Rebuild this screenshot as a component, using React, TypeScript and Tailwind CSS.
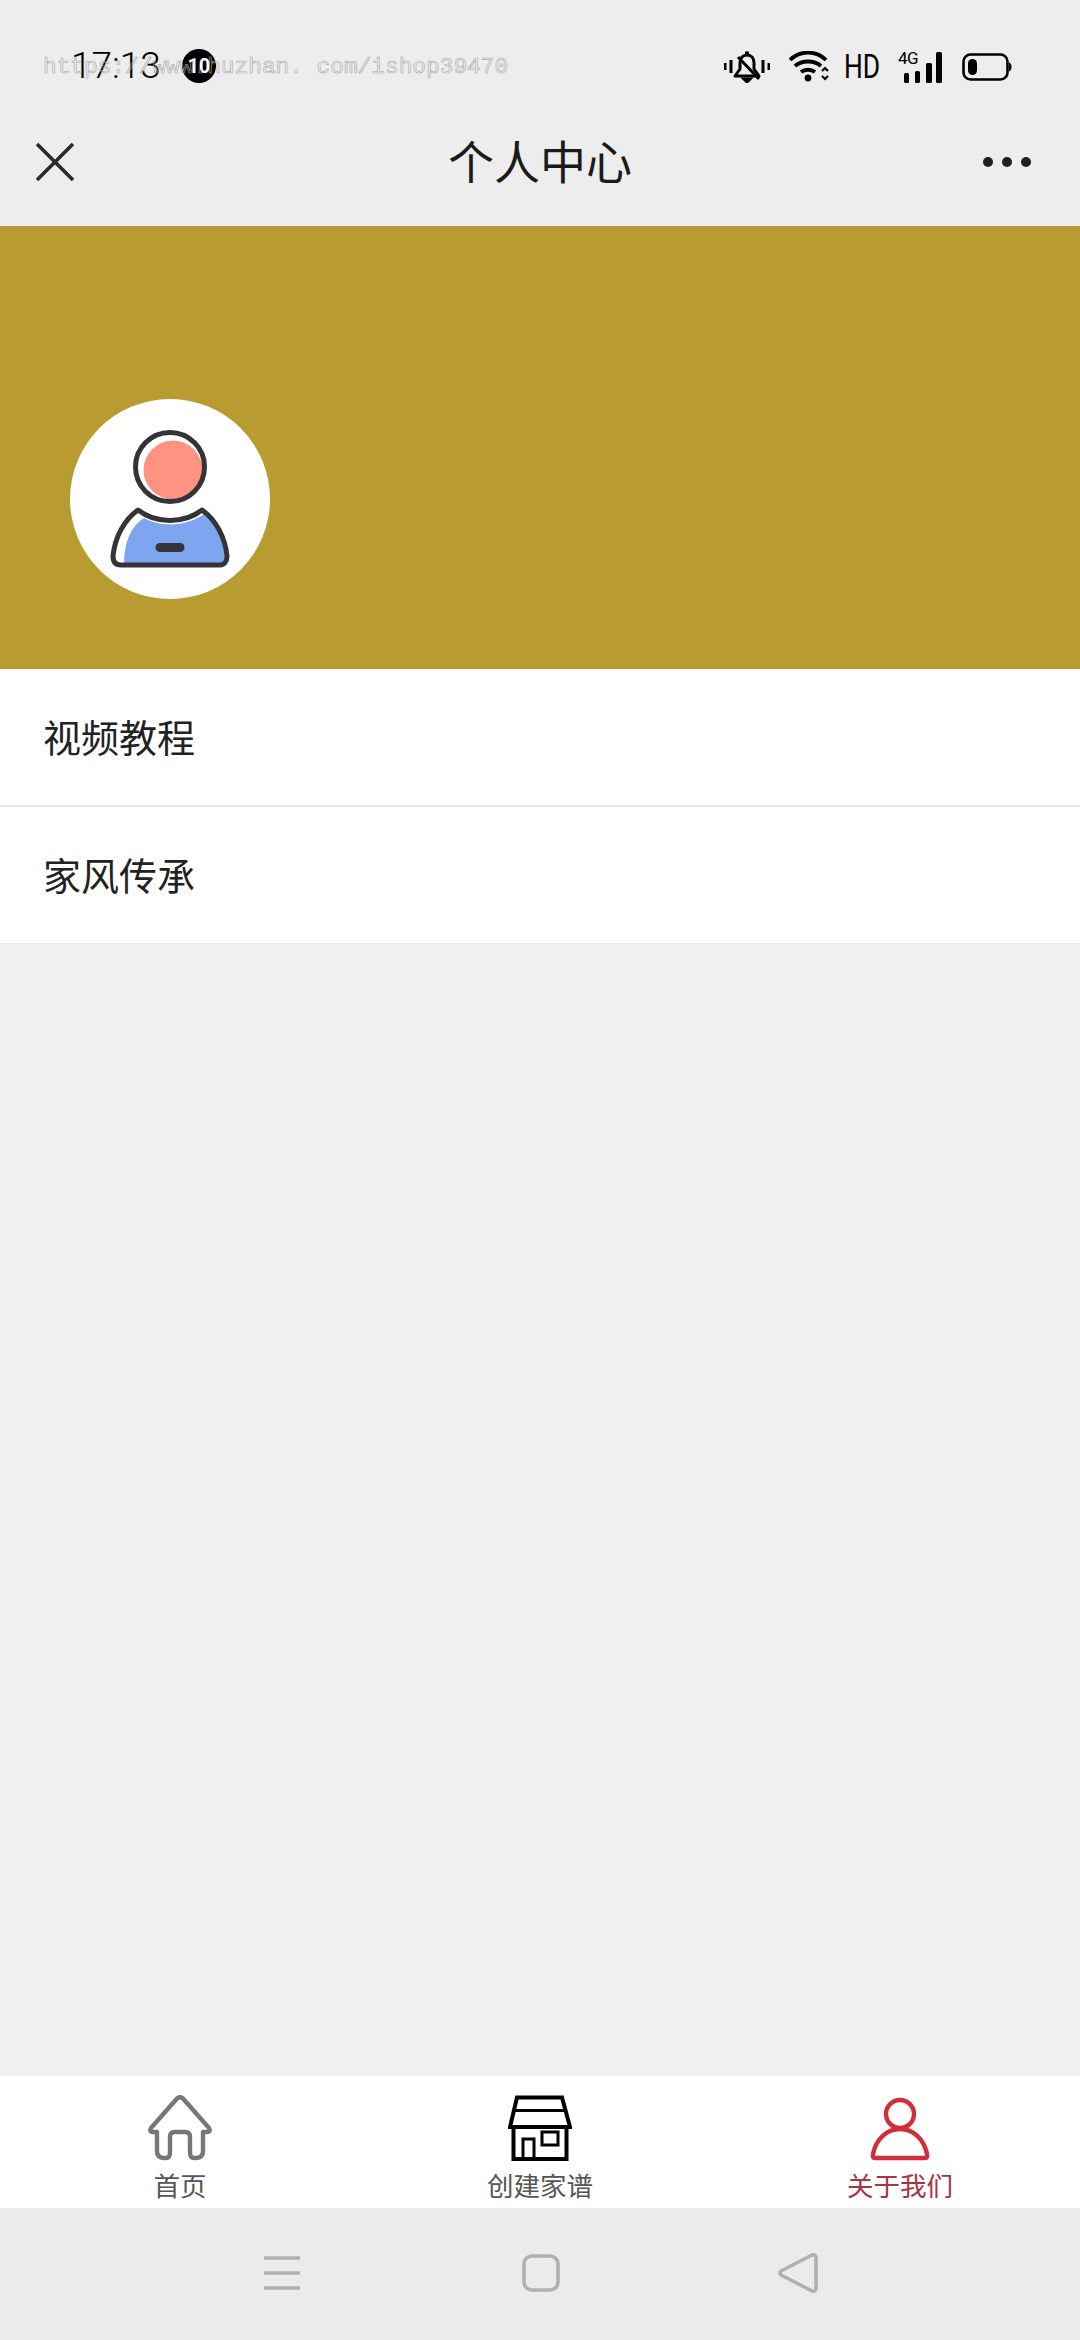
const cjk = "font-['Noto_Sans_CJK_SC','Noto_Sans',sans-serif]";

function Bell() {
  return (
    <svg width="46" height="32" viewBox="0 0 46 32" fill="none" stroke="#000" strokeWidth="3">
      <path d="M1 12v7M7 9v13M39 9v13M45 12v7" />
      <path d="M11 25h24l-5-7v-6c0-5-3-8-7-8s-7 3-7 8v6z" strokeLinejoin="round" />
      <path d="M21 2h4M20 28h6l-3 3z" />
      <path d="M14 6l21 22" />
    </svg>
  );
}

function Wifi() {
  return (
    <svg width="41" height="32" viewBox="0 0 41 32" fill="none" stroke="#000" strokeWidth="3.8">
      <path d="M1 9c10-10 26-10 36 0" />
      <path d="M6 15c7-6 19-6 26 0" />
      <path d="M12 21c4-3 10-3 14 0" />
      <circle cx="19" cy="27" r="3.4" fill="#000" stroke="none" />
      <path d="M33 20l3-3 3 3M33 25l3 3 3-3" strokeWidth="2.2" />
    </svg>
  );
}

function Signal() {
  return (
    <div className="relative h-[32px] w-[44px]">
      <span className="absolute left-0 top-[-3px] font-['Roboto',sans-serif] text-[17px] font-normal leading-[20px] tracking-[-0.5px] text-black">4G</span>
      <svg width="44" height="32" viewBox="0 0 44 32" fill="#000" className="absolute left-0 top-0">
        <rect x="6" y="22" width="5" height="10" rx="1.5" />
        <rect x="17" y="20" width="5" height="12" rx="1.5" />
        <rect x="28" y="12" width="6" height="20" rx="1.5" />
        <rect x="38" y="1" width="6" height="31" rx="1.5" />
      </svg>
    </div>
  );
}

function Battery() {
  return (
    <svg width="50" height="28" viewBox="0 0 50 28" fill="none">
      <rect x="1.5" y="1.5" width="44" height="25" rx="7" stroke="#000" strokeWidth="2.6" />
      <rect x="6" y="6" width="9" height="16" rx="4.5" fill="#000" />
      <path d="M47.5 10c2 1 2 7 0 8z" fill="#000" stroke="#000" strokeWidth="1" />
    </svg>
  );
}

function Avatar() {
  return (
    <div className="h-[200px] w-[200px] overflow-hidden rounded-full bg-white">
      <svg width="200" height="200" viewBox="20 18 200 200" fill="none">
        <circle cx="123" cy="89" r="29.5" fill="#ff9382" />
        <circle cx="120" cy="86" r="34.5" stroke="#333338" strokeWidth="5" />
        <path d="M94 137c16 9 42 9 60-4 12 10 20 24 21 48l-4 3H74c0-22 6-38 20-47z" fill="#7ea6f0" />
        <path d="M88 129c18 14 46 14 64 0 14 10 23 27 25 46 0 6-3 9-7 9H71c-5 0-8-3-8-9 2-19 11-36 25-46z" stroke="#333338" strokeWidth="5" strokeLinejoin="round" />
        <rect x="105.500" y="162" width="29" height="9" rx="4.500" fill="#333338" />
      </svg>
    </div>
  );
}

function HomeIcon() {
  return (
    <svg width="64" height="66" viewBox="0 0 64 66" fill="none" stroke="#777" strokeWidth="4.4" strokeLinejoin="round">
      <path d="M29 3.500Q32 1 35 3.500L61 33Q63 37 59 37H55V56Q55 63 48 63H46Q42 63 42 57V42Q42 37 37 37H27Q22 37 22 42V57Q22 63 18 63H16Q9 63 9 56V37H5Q1 37 3 33Z" />
    </svg>
  );
}

function StoreIcon() {
  return (
    <svg width="64" height="66" viewBox="0 0 64 66" fill="none" stroke="#000">
      <path d="M9 2.500H54L62 32H2Z" strokeWidth="4" />
      <path d="M6 15.500H58" strokeWidth="3" />
      <path d="M5.500 31V64H58.500V31" strokeWidth="4" />
      <path d="M15 64V44H26V64" strokeWidth="3" />
      <rect x="34" y="37" width="16" height="13" strokeWidth="3" />
    </svg>
  );
}

function PersonIcon() {
  return (
    <svg width="64" height="66" viewBox="-3 -4 64 66" fill="none" stroke="#cf2f38" strokeWidth="4.4" strokeLinejoin="round">
      <circle cx="29" cy="15" r="14" />
      <path d="M4 59H54Q57 59 56 55C53 40 42 30 29 30C16 30 5 40 2 55Q1 59 4 59Z" />
    </svg>
  );
}

function MenuRow({ label, border }: { label: string; border: string }) {
  return (
    <div className={`flex h-[138px] items-center bg-white pb-[2px] pl-[43px] text-[38px] leading-none text-[#222] ${border}`}>
      {label}
    </div>
  );
}

function Tab({ icon, label, color }: { icon: React.ReactNode; label: string; color: string }) {
  return (
    <div className="flex flex-1 flex-col items-center pt-[19px]">
      {icon}
      <div className={`mt-[9px] text-[26.5px] leading-[30px] ${color}`}>{label}</div>
    </div>
  );
}

export default function App() {
  return (
    <div className={`relative flex h-[2340px] w-[1080px] flex-col overflow-hidden bg-[#f0f0f0] ${cjk}`}>
      <header className="bg-[#ededed]">
        <div className="flex h-[115px] items-start justify-between pl-[71px] pr-[68px] pt-[48px]">
          <div className="flex items-center">
            <span className="font-['Roboto',sans-serif] text-[37px] font-light leading-[36px] text-black">17:13</span>
            <span className="ml-[21px] flex h-[34px] w-[34px] items-center justify-center rounded-full bg-black font-['Roboto',sans-serif] text-[20px] font-bold leading-none text-white">10</span>
          </div>
          <div className="flex items-center pt-[3px]">
            <Bell />
            <div className="ml-[19px]"><Wifi /></div>
            <span className="ml-[14px] w-[36px] origin-left scale-x-[0.8] font-['Roboto',sans-serif] text-[33px] font-normal leading-[32px] text-black">HD</span>
            <div className="ml-[18px]"><Signal /></div>
            <div className="ml-[20px]"><Battery /></div>
          </div>
        </div>
        <div className="relative flex h-[111px] items-center justify-between pb-[18px] pl-[36px] pr-[49px]">
          <svg width="38" height="38" viewBox="0 0 38 38" stroke="#2a2a2a" strokeWidth="3.600">
            <path d="M1 1L37 37M37 1L1 37" />
          </svg>
          <div className="absolute inset-x-0 top-0 pt-[19px] text-center text-[46px] leading-[50px] text-[#1a1a1a]">个人中心</div>
          <div className="flex gap-[9px]">
            <span className="h-[10px] w-[10px] rounded-full bg-[#1f1f1f]" />
            <span className="h-[10px] w-[10px] rounded-full bg-[#1f1f1f]" />
            <span className="h-[10px] w-[10px] rounded-full bg-[#1f1f1f]" />
          </div>
        </div>
      </header>

      <section className="flex h-[443px] items-end bg-[#b89b31] pb-[70px] pl-[70px]">
        <Avatar />
      </section>

      <MenuRow label="视频教程" border="border-b-2 border-[#e8e8e8]" />
      <MenuRow label="家风传承" border="border-b-2 border-[#ebebeb]" />

      <div className="flex-1" />

      <nav className="flex h-[132px] bg-white">
        <Tab icon={<HomeIcon />} label="首页" color="text-[#555]" />
        <Tab icon={<StoreIcon />} label="创建家谱" color="text-[#555]" />
        <Tab icon={<PersonIcon />} label="关于我们" color="text-[#a93440]" />
      </nav>

      <footer className="flex h-[132px] items-center justify-center bg-[#ebebeb] pb-[2px]">
        <svg width="38" height="36" viewBox="0 0 38 36" stroke="#b0b0b0" strokeWidth="3.600">
          <path d="M1 3H37M1 18H37M1 33H37" />
        </svg>
        <svg className="ml-[221px]" width="38" height="38" viewBox="0 0 38 38" fill="none" stroke="#b0b0b0" strokeWidth="3.600">
          <rect x="2" y="2" width="34" height="34" rx="8" />
        </svg>
        <svg className="ml-[218px]" width="40" height="42" viewBox="0 0 40 42" fill="none" stroke="#b0b0b0" strokeWidth="3.600" strokeLinejoin="round">
          <path d="M34 3L3 19Q1 21 3 23L34 39Q38 40 38 36V6Q38 2 34 3Z" />
        </svg>
      </footer>

      <div className="pointer-events-none absolute left-[43px] top-[51px] whitespace-pre font-['Liberation_Mono',monospace] text-[22.8px] leading-[32px] text-transparent [-webkit-text-stroke:0.6px_#a8a8a8]">
        https://www.huzhan. com/ishop39470
      </div>
    </div>
  );
}
